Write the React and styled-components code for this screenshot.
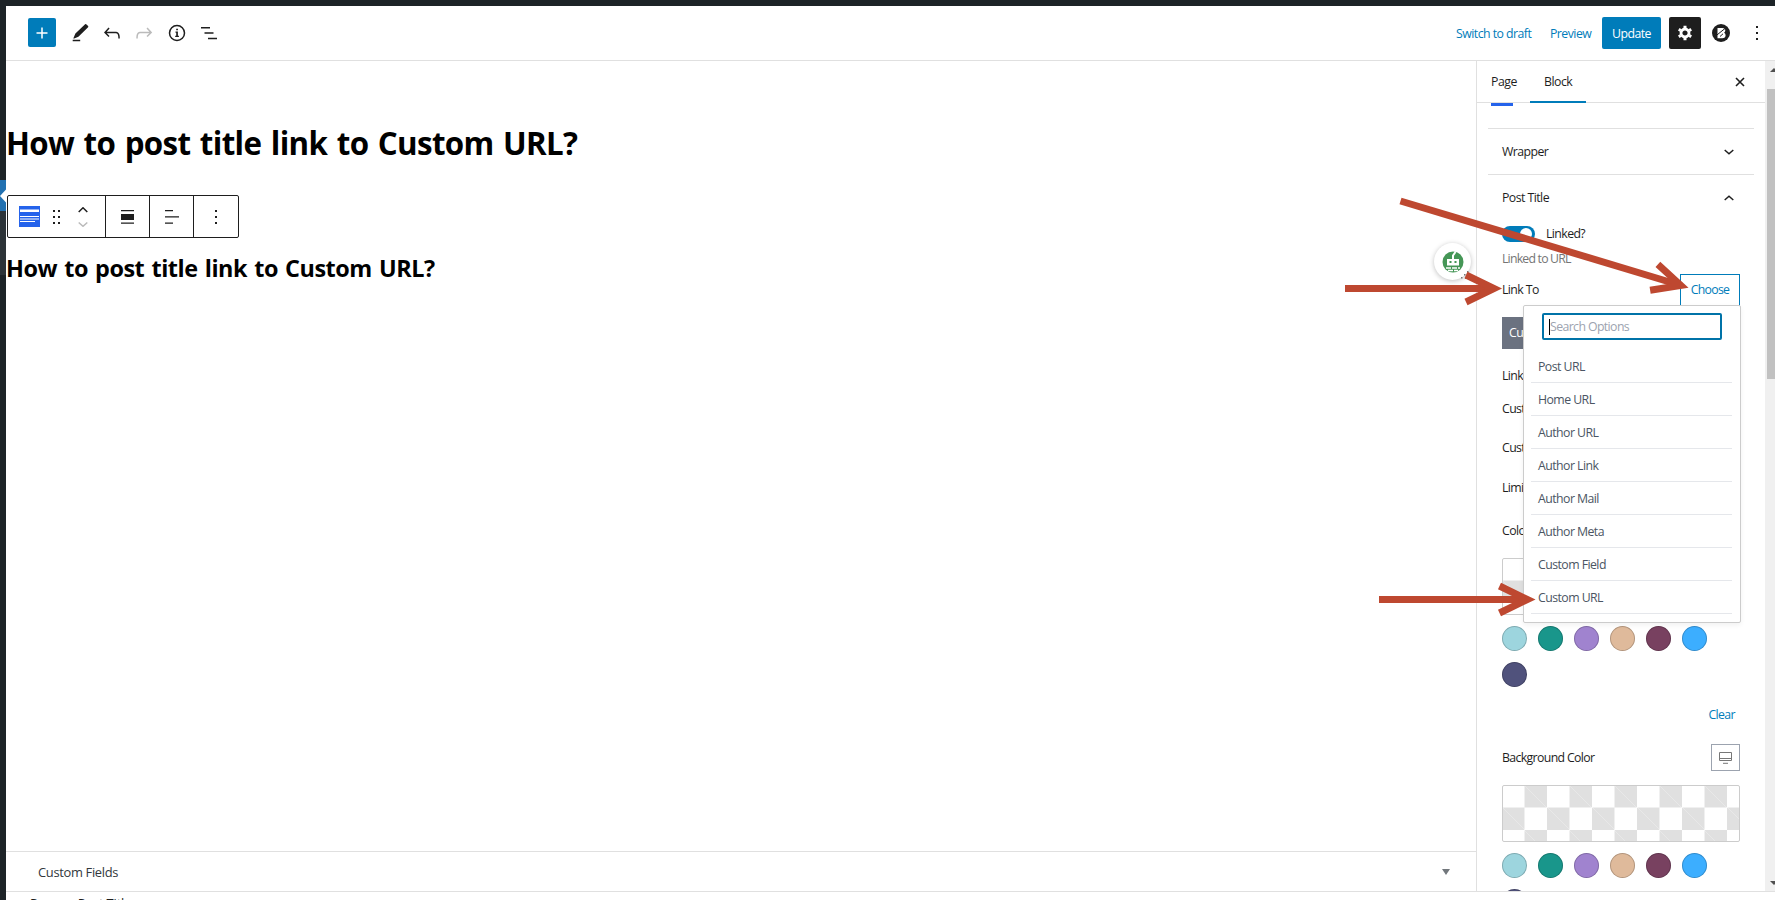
import React from 'react';
import styled, { createGlobalStyle, css } from 'styled-components';

const GlobalStyle = createGlobalStyle`
  * { box-sizing: border-box; }
  html, body, #root { margin: 0; height: 900px; }
  body {
    background: #fff;
    color: #1e1e1e;
    font: 12.3px/20px "Open Sans", sans-serif;
    letter-spacing: -0.6px;
    overflow: hidden;
  }
  h1, h2, p, ul { margin: 0; padding: 0; }
  button { font: inherit; letter-spacing: inherit; padding: 0; margin: 0; background: none; border: 0; color: inherit; }
`;

const Page = styled.div`
  position: relative;
  display: grid;
  grid-template: 6px 894px / 6px 1fr;
  width: 1775px;
  height: 900px;
  overflow: hidden;
`;
const AdminBar = styled.div`grid-column: 1 / -1; background: #1d2327;`;
const AdminMenu = styled.div`background: #1d2327; padding-top: 174px;`;
const MenuCurrent = styled.div`
  height: 31px; background: #2271b1; display: flex; align-items: center;
  svg { display: block; }
`;
const Submenu = styled.div`height: 64px; background: #2c3338;`;

const Editor = styled.div`display: grid; grid-template-rows: 55px 831px 8px; min-width: 0;`;
const Header = styled.header`
  display: flex; align-items: center; justify-content: space-between;
  border-bottom: 1px solid #e0e0e0;
  padding-left: 22px;
`;
const Tools = styled.div`display: flex; align-items: center;`;
const ToolButton = styled.button`
  display: flex; width: 24px; height: 24px; margin-right: ${p => p.$gap ?? 8}px;
  color: ${p => (p.$disabled ? '#bbb' : '#1e1e1e')};
`;
const AddButton = styled.button`
  display: flex; align-items: center; justify-content: center;
  width: 28px; height: 29px; margin: -1px 12px 0 0;
  background: #007cba; color: #fff; border-radius: 2px;
`;
const Actions = styled.div`display: flex; align-items: center; height: 100%;`;
const TextAction = styled.button`
  width: ${p => p.$w}px; padding-top: 1px; text-align: left; color: #007cba; white-space: nowrap; letter-spacing: -0.53px;
`;
const Update = styled.button`
  width: 59px; height: 32px; padding-top: 1px; background: #007cba; color: #fff; border-radius: 2px;
  margin-right: 8px; letter-spacing: -0.55px;
`;
const Settings = styled.button`
  display: flex; align-items: center; justify-content: center;
  width: 32px; height: 32px; border-radius: 2px; background: #1e1e1e; color: #fff; margin-right: 10px;
`;
const IconButton = styled.button`
  display: flex; align-items: center; justify-content: center; width: ${p => p.$w}px; padding-left: ${p => p.$pad ?? 0}px;
`;

const Workspace = styled.div`display: grid; grid-template-columns: 1470px 289px 10px; border-bottom: 1px solid #e0e0e0;`;
const Canvas = styled.main`display: flex; flex-direction: column; min-width: 0;`;
const Content = styled.div`flex: 1; padding-top: 58px;`;
const PostTitle = styled.h1`
  font-size: 31.3px; line-height: 48px; font-weight: 700; color: #000; letter-spacing: -0.66px; word-spacing: 2px;
  white-space: nowrap; margin-bottom: 28px;
`;
const BlockTitle = styled.h2`
  font-size: 23.4px; line-height: 32px; font-weight: 700; color: #000; letter-spacing: -0.45px; word-spacing: 1.5px;
  white-space: nowrap; margin-top: 14px;
`;
const BlockToolbar = styled.div`
  display: flex; width: 232px; height: 43px; margin-left: 1px; border: 1px solid #1e1e1e; border-radius: 2px;
`;
const ToolGroup = styled.div`
  display: flex; align-items: center; justify-content: center; width: ${p => p.$w}px;
  & + & { border-left: 1px solid #1e1e1e; }
`;
const BlockGroup = styled.div`
  display: flex; align-items: center; width: 98px; padding-left: 11px; border-right: 1px solid #1e1e1e;
`;
const Movers = styled.div`display: flex; margin-left: 17px;`;
const DragDots = styled.div`display: flex; margin-left: 13px;`;
const MetaBox = styled.div`
  height: 40px; border-top: 1px solid #e0e0e0; display: flex; align-items: center; justify-content: space-between;
  padding: 0 26px 0 32px; color: #32373c; font-size: 12.9px; letter-spacing: -0.32px;
`;
const Crumbs = styled.footer`height: 8px; overflow: hidden; padding: 2px 0 0 24px; line-height: 18px; font-size: 12.8px; letter-spacing: -0.1px;`;

const Sidebar = styled.aside`border-left: 1px solid #e0e0e0; height: 830px; overflow: hidden;`;
const Tabs = styled.div`
  display: flex; height: 42px; border-bottom: 1px solid #e0e0e0; padding-right: 13px; align-items: stretch;
`;
const Tab = styled.button`
  width: ${p => p.$w}px; padding: 1px 0 0 14px; text-align: left; letter-spacing: -0.5px;
  ${p => p.$active && css`box-shadow: 0 1px #007cba, inset 0 -1px #007cba;`}
`;
const Close = styled.button`display: flex; align-items: center; margin-left: auto;`;
const Marker = styled.div`width: 22px; height: 3px; margin: 0 0 22px 14px; background: #2563eb;`;
const Panels = styled.div`padding: 0 11px;`;
const PanelHead = styled.div`
  display: flex; align-items: center; justify-content: space-between; height: ${p => p.$h}px;
  border-top: 1px solid #e0e0e0; padding: 1px 20px 0 14px; font-weight: 500; letter-spacing: -0.55px;
`;
const PanelBody = styled.div`padding: 0 14px;`;
const ToggleRow = styled.div`display: flex; align-items: center; gap: 11px; height: 24px; line-height: 22px; margin-top: 2px;`;
const Toggle = styled.span`
  display: flex; align-items: center; justify-content: flex-end; width: 33px; height: 16px; padding-right: 3px;
  border-radius: 9px; background: #007cba;
  &::after { content: ''; width: 12px; height: 12px; border-radius: 50%; background: #fff; }
`;
const Help = styled.p`color: #757575; line-height: 20px; margin-top: 3px; letter-spacing: -0.8px;`;
const LinkRow = styled.div`
  display: flex; justify-content: space-between; align-items: center; height: 33px; margin-top: 5px;
`;
const LinkLabel = styled.span`padding-bottom: 2px;`;
const Choose = styled.button`width: 60px; height: 33px; border: 1px solid #007cba; color: #007cba; padding-bottom: 1px; letter-spacing: -0.7px;`;
const Chip = styled.div`width: 90px; height: 32px; margin-top: 10px; padding-left: 7px; line-height: 31px; background: #6b7280; color: #fff;`;
const Setting = styled.div`height: 20px; line-height: 19px; margin-top: ${p => p.$top}px;`;
const Checker = styled.div`
  height: 57px; margin-top: ${p => p.$top}px; border: 1px solid #ccc; border-radius: 2px;
  background-image:
    repeating-linear-gradient(45deg, #e0e0e0 25%, transparent 0, transparent 75%, #e0e0e0 0, #e0e0e0),
    repeating-linear-gradient(45deg, #e0e0e0 25%, transparent 0, transparent 75%, #e0e0e0 0, #e0e0e0);
  background-size: 45px 45px;
  background-position: -1px -1px, 21.5px 21.5px;
`;
const Swatches = styled.div`display: flex; flex-wrap: wrap; gap: 11px; margin-top: ${p => p.$top}px;`;
const Swatch = styled.span`
  width: 25px; height: 25px; border-radius: 50%; background: ${p => p.$c}; box-shadow: inset 0 0 0 1px rgba(0,0,0,.2);
`;
const Clear = styled.button`display: block; margin: 18px 5px 0 auto; color: #007cba;`;
const ColorHead = styled.div`
  display: flex; align-items: center; justify-content: space-between; height: 27px; margin-top: 19px; letter-spacing: -0.64px;
`;
const Device = styled.button`display: flex; align-items: center; justify-content: center; width: 29px; height: 27px; border: 1px solid #9ca3af;`;

const Scroll = styled.div`
  height: 830px; background: #f0f0f0; display: flex; flex-direction: column; align-items: flex-end; overflow: hidden;
`;
const ScrollEnd = styled.div`height: 28px; width: 5px; overflow: hidden; padding-top: ${p => p.$pt}px; svg { display: block; }`;
const Thumb = styled.div`width: 8px; height: 290px; background: #c1c1c1; margin-bottom: auto;`;

const Popover = styled.div`
  position: absolute; left: 1523px; top: 305px; width: 218px; height: 318px; padding: 7px 8px 0 7px;
  background: #fff; border: 1px solid #ccc; border-radius: 2px; box-shadow: 0 2px 5px rgba(0,0,0,.06);
`;
const Search = styled.div`
  display: flex; align-items: center; width: 180px; height: 27px; margin: 0 0 10px 11px; padding: 1px 0 0 5px;
  border: 2px solid #0073a8; border-radius: 2px; color: #9ca3af; line-height: 22px;
  &::before { content: ''; width: 1px; height: 16px; margin-bottom: 1px; background: #000; }
`;
const Option = styled.div`
  height: 33px; line-height: 33px; padding-left: 7px; border-bottom: 1px solid #e5e7eb; color: #4b5563;
  letter-spacing: -0.55px;
`;
const Assistant = styled.div`
  position: absolute; left: 1434px; top: 243px; width: 37px; height: 37px; border-radius: 50%;
  background: #fff; box-shadow: 0 1px 5px rgba(0,0,0,.25); display: flex; align-items: center; justify-content: center;
`;
const Annotations = styled.svg`position: absolute; left: 0; top: 0; pointer-events: none;`;

const Icon = ({ size = 24, children }) => (
  <svg width={size} height={size} viewBox="0 0 24 24" fill="currentColor">{children}</svg>
);
const Chevron = ({ up, color = '#1e1e1e' }) => (
  <svg width="10" height="6" viewBox="0 0 10 6" fill="none" stroke={color} strokeWidth="1.5">
    <path d={up ? 'M.7 5 5 1.3 9.3 5' : 'M.7 1 5 4.7 9.3 1'} />
  </svg>
);

const colors = ['#9dd5de', '#19968b', '#a083cf', '#dfba9b', '#784160', '#3caeff', '#50527c'];
const options = ['Post URL', 'Home URL', 'Author URL', 'Author Link', 'Author Mail', 'Author Meta', 'Custom Field', 'Custom URL'];

const Palette = ({ top }) => (
  <Swatches $top={top}>{colors.map(c => <Swatch key={c} $c={c} />)}</Swatches>
);

const Arrow = ({ x1, y1, x2, y2 }) => {
  const angle = (Math.atan2(y2 - y1, x2 - x1) * 180) / Math.PI;
  const length = Math.hypot(x2 - x1, y2 - y1);
  return (
    <g transform={`translate(${x2} ${y2}) rotate(${angle})`} stroke="#be4830" strokeWidth="7" fill="none">
      <path d={`M${-length} 0H-7`} />
      <path d="M-35.500-13.500-7.500 0-35.500 13.500" strokeMiterlimit="10" />
    </g>
  );
};

export default function App() {
  return (
    <Page>
      <GlobalStyle />
      <AdminBar />
      <AdminMenu>
        <MenuCurrent><svg width="6" height="16"><path d="M6 1.500 0 8l6 6.500Z" fill="#fff" /></svg></MenuCurrent>
        <Submenu />
      </AdminMenu>
      <Editor>
        <Header>
          <Tools>
            <AddButton><svg width="12" height="12" stroke="currentColor" strokeWidth="1.5"><path d="M6 .5v11M.5 6h11" /></svg></AddButton>
            <ToolButton><Icon><path d="m20.100 5.100-1.900-1.900a.8.8 0 0 0-1.100 0L7.400 12.600 5.500 16.900c-.2.500.2.900.7.700l4.200-1.900 9.700-9.500c.3-.3.300-.8 0-1.100zM4.700 18.800h7.500v1.500H4.700z" /></Icon></ToolButton>
            <ToolButton><Icon><path d="M18.300 11.700c-.6-.6-1.400-.9-2.300-.9H6.700l2.900-3.300-1.100-1-4.500 5L8.500 16l1-1-2.700-2.700H16c.5 0 .9.200 1.300.5 1 1 1 3.400 1 4.500v.3h1.500v-.2c0-1.500 0-4.300-1.500-5.700z" /></Icon></ToolButton>
            <ToolButton $disabled $gap={9}><Icon><path d="M15.600 6.500l-1.100 1 2.900 3.300H8c-.9 0-1.700.3-2.300.9-1.400 1.500-1.400 4.200-1.400 5.600v.2h1.500v-.3c0-1.100 0-3.500 1-4.500.3-.3.700-.5 1.300-.5h9.200L14.500 15l1.100 1.100 4.600-4.600-4.600-5z" /></Icon></ToolButton>
            <ToolButton><Icon><circle cx="12" cy="12" r="7.500" fill="none" stroke="currentColor" strokeWidth="1.5" /><path d="M11.200 7.700h1.700v1.600h-1.700zM10.500 10.500h2.400v4.300h1v1.300h-3.700v-1.300h1V11.800h-.7z" /></Icon></ToolButton>
            <ToolButton><Icon><path d="M4 6h9v1.500H4zM7.500 11.300h9v1.500h-9zM11 16.800h9v1.500h-9z" /></Icon></ToolButton>
          </Tools>
          <Actions>
            <TextAction $w={94}>Switch to draft</TextAction>
            <TextAction $w={52}>Preview</TextAction>
            <Update>Update</Update>
            <Settings>
              <svg width="16" height="16" viewBox="-8 -8 16 16" fill="none" stroke="currentColor">
                <circle r="4" strokeWidth="2.800" />
                <path d="M0-5V-7.300M0 5V7.300M4.300-2.500 6.200-3.700M4.300 2.500 6.200 3.700M-4.300-2.500-6.200-3.700M-4.300 2.500-6.200 3.700" strokeWidth="3" />
              </svg>
            </Settings>
            <IconButton $w={20}>
              <svg width="18" height="18" viewBox="0 0 18 18" fill="none">
                <circle cx="9" cy="9" r="9" fill="#1e1e1e" />
                <path d="M5.500 4H10.300q3 0 3 2.500 0 1.300-1.200 2.200 1.500.800 1.500 2.600 0 2.900-3.400 2.900H5.500Z" fill="#fff" />
                <path d="M4.500 11.300 13 4.500" stroke="#1e1e1e" strokeWidth="1" />
                <path d="m8 12.500 3-2.700" stroke="#1e1e1e" strokeWidth="1" />
              </svg>
            </IconButton>
            <IconButton $w={44} $pad={8}><svg width="2" height="14" fill="#1e1e1e"><path d="M0 0h2v2H0zM0 6h2v2H0zM0 12h2v2H0z" /></svg></IconButton>
          </Actions>
        </Header>
        <Workspace>
          <Canvas>
            <Content>
              <PostTitle>How to post title link to Custom URL?</PostTitle>
              <BlockToolbar>
                <BlockGroup>
                  <svg width="21" height="21"><path fill="#2563eb" d="M0 0h21v21H0z" /><path fill="#fff" d="M1 4h19v2H1zM1 10h19v1H1zM1 15h15v1H1z" /><path fill="#fff" opacity=".5" d="M1 3h19v1H1zM1 12h19v2H1z" /></svg>
                  <DragDots><svg width="8" height="14" fill="#1e1e1e"><path d="M0 0h2v2H0zM5 0h2v2H5zM0 6h2v2H0zM5 6h2v2H5zM0 12h2v2H0zM5 12h2v2H5z" /></svg></DragDots>
                  <Movers><svg width="10" height="20" fill="none" strokeWidth="1.500"><path d="M.7 5 5 .800l4.300 4.200" stroke="#1e1e1e" /><path d="M.7 15.500 5 19.300l4.300-3.800" stroke="#bbb" /></svg></Movers>
                </BlockGroup>
                <ToolGroup $w={43}><svg width="13" height="14" fill="#1e1e1e"><path d="M0 0h13v1.300H0zM0 4h13v6H0zM0 12.500h13v1.300H0z" /></svg></ToolGroup>
                <ToolGroup $w={44}><svg width="14" height="14" fill="#1e1e1e"><path d="M0 0h8v1.300H0zM0 6.300h14v1.300H0zM0 12.500h8v1.300H0z" /></svg></ToolGroup>
                <ToolGroup $w={44}><svg width="2" height="14" fill="#1e1e1e"><path d="M0 0h2v2H0zM0 6h2v2H0zM0 12h2v2H0z" /></svg></ToolGroup>
              </BlockToolbar>
              <BlockTitle>How to post title link to Custom URL?</BlockTitle>
            </Content>
            <MetaBox>Custom Fields<svg width="8" height="6"><path d="M0 0h8L4 6Z" fill="#72777c" /></svg></MetaBox>
          </Canvas>
          <Sidebar>
            <Tabs>
              <Tab $w={53}>Page</Tab>
              <Tab $w={56} $active>Block</Tab>
              <Close><svg width="24" height="24" viewBox="0 0 24 24" stroke="#1e1e1e" strokeWidth="1.600"><path d="m8 8 8 8m0-8-8 8" /></svg></Close>
            </Tabs>
            <Marker />
            <Panels>
              <PanelHead $h={46}>Wrapper<Chevron /></PanelHead>
              <PanelHead $h={46}>Post Title<Chevron up /></PanelHead>
              <PanelBody>
                <ToggleRow><Toggle />Linked?</ToggleRow>
                <Help>Linked to URL</Help>
                <LinkRow><LinkLabel>Link To</LinkLabel><Choose>Choose</Choose></LinkRow>
                <Chip>Custom URL</Chip>
                <Setting $top={17}>Link</Setting>
                <Setting $top={13}>Cust</Setting>
                <Setting $top={19}>Cust</Setting>
                <Setting $top={20}>Limi</Setting>
                <Setting $top={23}>Color</Setting>
                <Checker $top={17} />
                <Palette top={11} />
                <Clear>Clear</Clear>
                <ColorHead>Background Color
                  <Device><svg width="13" height="12" fill="none" stroke="#777"><path d="M.5.500h12v8H.500zM1 6.500h11M4 11.300h5" /></svg></Device>
                </ColorHead>
                <Checker $top={14} />
                <Palette top={11} />
              </PanelBody>
            </Panels>
          </Sidebar>
          <Scroll>
            <ScrollEnd $pt={7}><svg width="8" height="4"><path d="M0 4 4 0l4 4Z" fill="#505050" /></svg></ScrollEnd>
            <Thumb />
            <ScrollEnd $pt={18}><svg width="8" height="4"><path d="M0 0 4 4l4-4Z" fill="#505050" /></svg></ScrollEnd>
          </Scroll>
        </Workspace>
        <Crumbs>Page → Post Title</Crumbs>
      </Editor>
      <Assistant>
        <svg width="22" height="22" viewBox="0 0 22 22">
          <circle cx="11" cy="11" r="10.500" fill="#459656" />
          <path d="M11 8V4.500L13.500 1" stroke="#fff" strokeWidth="2" fill="none" />
          <path d="M5 8h12v6.500H5z" fill="#fff" /><path d="M7.500 10h2v2h-2zM12.500 10h2v2h-2z" fill="#459656" />
          <path d="M4 17h14M6 19.500h10" stroke="#fff" strokeWidth="1.500" strokeDasharray="5 1" />
        </svg>
      </Assistant>
      <Popover>
        <Search>Search Options</Search>
        {options.map(o => <Option key={o}>{o}</Option>)}
      </Popover>
      <Annotations width="1775" height="900">
        <path d="M1461 277h1.500v1.500h-1.500zM1464 274h1.500v1.500h-1.500zM1465 277.500h1.500v1.500h-1.500zM1467 271h1.500v1.500h-1.500z" fill="#777" />
        <Arrow x1={1400.500} y1={201} x2={1688} y2={287.500} />
        <Arrow x1={1345} y1={288.500} x2={1501.500} y2={288.500} />
        <Arrow x1={1379} y1={599.500} x2={1535} y2={599.500} />
      </Annotations>
    </Page>
  );
}
